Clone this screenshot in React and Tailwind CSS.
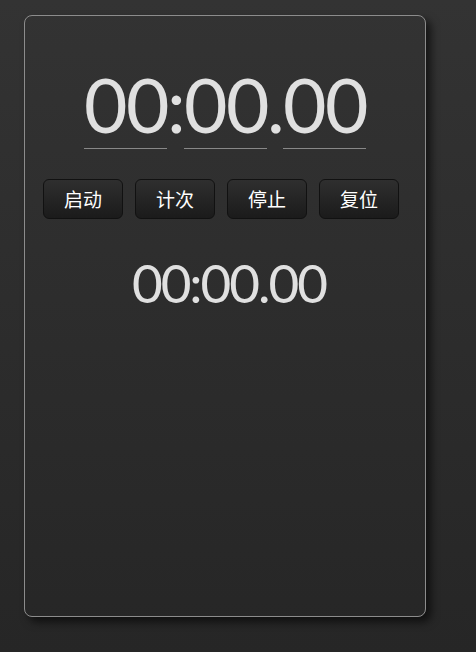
import React from 'react'

const buttons = ['启动', '计次', '停止', '复位']

export default function App() {
  return (
    <div className="min-h-[652px] w-full bg-gradient-to-b from-[#333333] to-[#262626] pt-[15px] pl-[24px]" style={{ fontFamily: 'Lato, "Noto Sans CJK SC", sans-serif' }}>
      <div className="h-[602px] w-[402px] rounded-[8px] border border-[#8c8c8c] shadow-[5px_5px_8px_rgba(0,0,0,0.6)]">
        {/* main time */}
        <div className="mt-[44px] flex justify-center text-[75px] leading-[88px] tracking-[-1.5px] text-[#e0e0e0]">
          <span className="w-[83px] border-b border-[#888] text-center">00</span>
          <span className="w-[17px] text-center">:</span>
          <span className="w-[83px] border-b border-[#888] text-center">00</span>
          <span className="w-[16px] text-center">.</span>
          <span className="w-[83px] border-b border-[#888] text-center">00</span>
        </div>

        {/* controls */}
        <div className="mt-[30px] flex gap-3 pl-[18px]">
          {buttons.map((b) => (
            <button
              key={b}
              className="h-[40px] w-[80px] rounded-[6px] border border-[#111] bg-gradient-to-b from-[#2f2f2f] to-[#1b1b1b] text-[19px] text-white"
              style={{ fontFamily: '"Noto Sans CJK SC", sans-serif' }}
            >
              {b}
            </button>
          ))}
        </div>

        {/* lap time */}
        <div className="mt-[34px] pl-[8px] text-center text-[53px] leading-[60px] tracking-[-2px] text-[#e0e0e0]">
          00:00.00
        </div>
      </div>
    </div>
  )
}
